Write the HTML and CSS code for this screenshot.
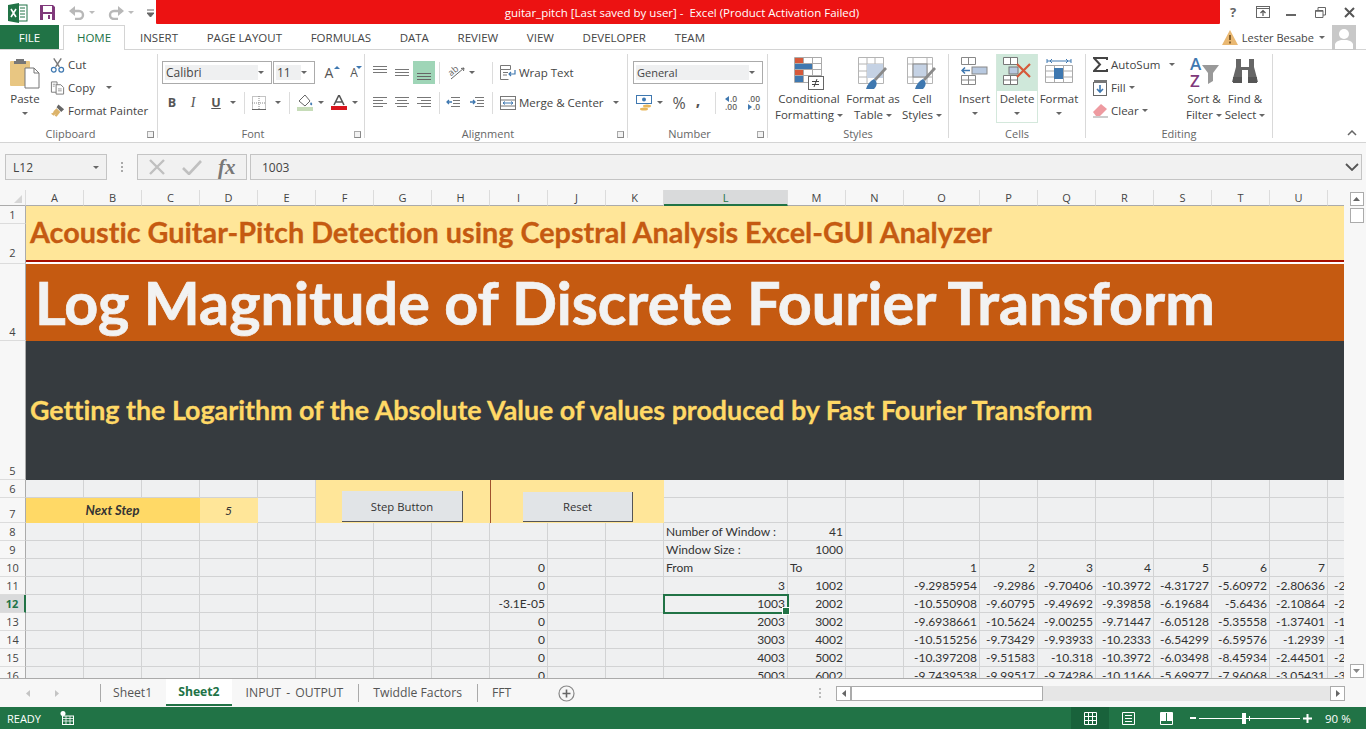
FILE: index.html
```html
<!DOCTYPE html>
<html lang="en">
<head>
  <meta charset="UTF-8" />
  <title>guitar_pitch - Excel</title>
  <link rel="stylesheet" href="styles.css">
</head>
<body>

  <!-- title bar -->
  <div class="titlebar">
    <div class="qat">
      <svg class="logo" width="20" height="20" viewBox="0 0 20 20"><rect x="7" y="2" width="12" height="16" fill="#fff" stroke="#217346"/><path d="M12 5h5M12 8h5M12 11h5M12 14h5" stroke="#217346"/><path d="M0 2l11-2v20L0 18z" fill="#217346"/><path d="M3 6l5 8M8 6l-5 8" stroke="#fff" stroke-width="1.6"/></svg>
      <svg class="save" width="15" height="15" viewBox="0 0 15 15"><path d="M0 0h13l2 2v13H0z" fill="#80397b"/><rect x="3" y="1" width="9" height="6" fill="#fff"/><rect x="3" y="9" width="9" height="6" fill="#fff"/><rect x="8" y="10" width="2" height="4" fill="#80397b"/></svg>
      <svg class="undo" width="16" height="14" viewBox="0 0 16 14"><path d="M2 5h8a4 4 0 0 1 0 8H6" fill="none" stroke="#b8b8b8" stroke-width="2.4"/><path d="M6 0v10L0 5z" fill="#b8b8b8"/></svg>
      <i class="caret caret-light qat-caret"></i>
      <svg class="redo" width="16" height="14" viewBox="0 0 16 14"><path d="M14 5H6a4 4 0 0 0 0 8h4" fill="none" stroke="#b8b8b8" stroke-width="2.4"/><path d="M10 0v10l6-5z" fill="#b8b8b8"/></svg>
      <i class="caret caret-light qat-caret"></i>
      <svg class="custom" width="7" height="8" viewBox="0 0 7 8"><path d="M0 1h7M0 4h7l-3.500 4z" stroke="#666" fill="#666"/></svg>
    </div>
    <div class="title">guitar_pitch [Last saved by user] -&nbsp; Excel (Product Activation Failed)</div>
    <div class="winbtns">
      <span class="help">?</span>
      <svg width="14" height="12" viewBox="0 0 14 12"><rect x=".5" y=".5" width="13" height="11" fill="none" stroke="#666"/><path d="M1 2.500h12" stroke="#666"/><path d="M7 10V5M4.500 7L7 4.500 9.500 7" fill="none" stroke="#555" stroke-width="1.200"/></svg>
      <svg width="10" height="12" viewBox="0 0 10 12"><path d="M0 9h10" stroke="#666" stroke-width="2"/></svg>
      <svg width="11" height="11" viewBox="0 0 11 11"><path d="M3 3V.5h7.500V8H8M.5 3.500H8v7H.5z" fill="none" stroke="#666"/><path d="M.5 4h7.500" stroke="#666" stroke-width="1.500"/></svg>
      <svg width="11" height="11" viewBox="0 0 11 11"><path d="M1 1l9 9M10 1l-9 9" stroke="#555" stroke-width="2"/></svg>
    </div>
  </div>

  <!-- tabs -->
  <div class="tabs">
    <div class="tab-file">FILE</div>
    <div class="tab-home">HOME</div>
    <div class="tab-list">
      <span>INSERT</span><span>PAGE LAYOUT</span><span>FORMULAS</span><span>DATA</span><span>REVIEW</span><span>VIEW</span><span>DEVELOPER</span><span>TEAM</span>
    </div>
    <div class="account">
      <svg width="16" height="15" viewBox="0 0 16 15"><path d="M8 0l8 15H0z" fill="#e9b872"/><path d="M8 5v5M8 11.500v2" stroke="#6b4a1c" stroke-width="1.600"/></svg>
      <span class="user">Lester Besabe</span>
      <i class="caret"></i>
      <div class="avatar"><svg width="24" height="24" viewBox="0 0 24 24"><circle cx="12" cy="9" r="5" fill="#fff"/><path d="M3 24v-5q1-3 6-4h6q5 1 6 4v5z" fill="#fff"/></svg></div>
    </div>
  </div>

  <!-- ribbon -->
  <div class="ribbon">

    <div class="group g-clipboard">
      <div class="group-body">
        <div class="big w50">
          <div class="big-icon">
            <svg width="30" height="32" viewBox="0 0 30 32"><rect x="0" y="4" width="20" height="25" rx="1" fill="#e8c682"/><path d="M6 4V2h8v2h2v3H4V4z" fill="#777"/><path d="M15 11h9l5 5v15H15z" fill="#fff" stroke="#777"/><path d="M24 11v5h5" fill="none" stroke="#777"/></svg>
          </div>
          <div class="big-text">Paste</div>
          <i class="caret"></i>
        </div>
        <div class="stack">
          <div class="line">
            <svg class="ico" width="16" height="16" viewBox="0 0 16 16"><path d="M4 1l6 9M12 1L6 10" stroke="#777" stroke-width="1.500"/><circle cx="4" cy="13" r="2.500" fill="none" stroke="#3f78b0" stroke-width="1.300"/><circle cx="12" cy="13" r="2.500" fill="none" stroke="#3f78b0" stroke-width="1.300"/></svg>
            <span>Cut</span>
          </div>
          <div class="line">
            <svg class="ico" width="16" height="16" viewBox="0 0 16 16"><path d="M1.500 1.500h6v11h-6z" fill="#fff" stroke="#777"/><path d="M6.500 4.500h5l3 3v7h-8z" fill="#fff" stroke="#777"/><path d="M8.500 9h4M8.500 11h4M3 4h3M3 6h2" stroke="#999"/></svg>
            <span>Copy</span><i class="caret caret-copy"></i>
          </div>
          <div class="line">
            <svg class="ico" width="16" height="16" viewBox="0 0 16 16"><path d="M9 1l6 5-3 3-5-5z" fill="#666"/><path d="M7 5l4 4-4 5-2-1 1-2-2 2-3-2q3-1 3-3z" fill="#dcb36a"/></svg>
            <span>Format Painter</span>
          </div>
        </div>
      </div>
      <div class="group-label">Clipboard</div>
      <i class="launcher"></i>
    </div>

    <div class="group g-font">
      <div class="group-body grid-rows">
        <div class="tool-row">
          <div class="combo w110"><span class="combo-text c-font">Calibri</span><i class="caret"></i></div>
          <div class="combo w42 joined"><span class="combo-text c-size">11</span><i class="caret"></i></div>
          <div class="tool w28 glyph">A<i class="mini-up"></i></div>
          <div class="tool w22 glyph small-a">A<i class="mini-down"></i></div>
        </div>
        <div class="tool-row">
          <div class="tool w20 fmt"><b>B</b></div>
          <div class="tool w22 fmt"><i class="ital">I</i></div>
          <div class="tool w24 fmt"><b class="und">U</b></div>
          <div class="tool w10"><i class="caret"></i></div>
          <i class="sep ml6"></i>
          <div class="tool w28">
            <svg width="14" height="14" viewBox="0 0 14 14"><rect x=".5" y=".5" width="13" height="13" fill="none" stroke="#888" stroke-dasharray="1 1"/><path d="M7 0v14M0 7h14" stroke="#888" stroke-dasharray="1 1"/><path d="M0 13.500h14" stroke="#666"/></svg>
          </div>
          <div class="tool w10"><i class="caret"></i></div>
          <i class="sep ml6"></i>
          <div class="tool w21 ml5">
            <svg width="17" height="17" viewBox="0 0 17 17"><path d="M2 7l6-6 5 6-5 5z" fill="#fff" stroke="#666"/><path d="M14 8q2 2 1 3t-2-1z" fill="#3f78b0"/><rect x="0" y="13" width="16" height="4" fill="#c6dcb8"/></svg>
          </div>
          <div class="tool w10"><i class="caret"></i></div>
          <div class="tool w22 ml2">
            <svg width="16" height="15" viewBox="0 0 16 15"><path d="M3 10L8 0l5 10M5 7h6" fill="none" stroke="#555" stroke-width="1.600"/><rect y="11" width="16" height="4" fill="#d8161e"/></svg>
          </div>
          <div class="tool w10"><i class="caret"></i></div>
        </div>
      </div>
      <div class="group-label">Font</div>
      <i class="launcher"></i>
    </div>

    <div class="group g-align">
      <div class="group-body grid-rows">
        <div class="tool-row">
          <div class="tool w22"><svg width="14" height="14" viewBox="0 0 14 14"><path d="M0 .5h14M0 3.500h14M0 6.500h14" stroke="#777"/></svg></div>
          <div class="tool w22"><svg width="14" height="14" viewBox="0 0 14 14"><path d="M0 3.500h14M0 6.500h14M0 9.500h14" stroke="#777"/></svg></div>
          <div class="tool w22 on"><svg width="14" height="14" viewBox="0 0 14 14"><path d="M0 7.500h14M0 10.500h14M0 13.500h14" stroke="#666"/></svg></div>
          <i class="sep ml4"></i>
          <div class="tool w22 ml5"><svg class="svg-open" width="17" height="15" viewBox="0 0 17 15"><path d="M3 14L16 3" stroke="#666"/><path d="M16 3l-3 .5M16 3l-.5 3" stroke="#666"/><text x="0" y="9" class="svg-ab" transform="rotate(-40 5 6)">ab</text></svg></div>
          <div class="tool w10"><i class="caret"></i></div>
          <i class="sep ml15"></i>
          <div class="tool w15 ml7"><svg width="16" height="15" viewBox="0 0 16 15"><path d="M.5.500h10v4H.5zM.5 4.500v10h8M3 7.500h5M3 10h4" fill="none" stroke="#777"/><path d="M15 5v4H9M11 7L9 9l2 2" fill="none" stroke="#3f78b0" stroke-width="1.200"/></svg></div>
          <span class="tool-text">Wrap Text</span>
        </div>
        <div class="tool-row">
          <div class="tool w22"><svg width="14" height="12" viewBox="0 0 14 12"><path d="M0 .5h14M0 3.500h10M0 6.500h14M0 9.500h10" stroke="#777"/></svg></div>
          <div class="tool w22"><svg width="14" height="12" viewBox="0 0 14 12"><path d="M0 .5h14M2 3.500h10M0 6.500h14M2 9.500h10" stroke="#777"/></svg></div>
          <div class="tool w22"><svg width="14" height="12" viewBox="0 0 14 12"><path d="M0 .5h14M4 3.500h10M0 6.500h14M4 9.500h10" stroke="#777"/></svg></div>
          <i class="sep ml4"></i>
          <div class="tool w22 ml2"><svg width="14" height="12" viewBox="0 0 14 12"><path d="M5 .5h9M7 3.500h7M7 6.500h7M5 9.500h9" stroke="#777"/><path d="M6 5H1M3 3L1 5l2 2" fill="none" stroke="#3f78b0" stroke-width="1.300"/></svg></div>
          <div class="tool w22 ml2"><svg width="14" height="12" viewBox="0 0 14 12"><path d="M5 .5h9M7 3.500h7M7 6.500h7M5 9.500h9" stroke="#777"/><path d="M0 5h5M3 3l2 2-2 2" fill="none" stroke="#3f78b0" stroke-width="1.300"/></svg></div>
          <i class="sep ml4"></i>
          <div class="tool w15 ml7"><svg width="16" height="14" viewBox="0 0 16 14"><rect x=".5" y=".5" width="15" height="13" fill="none" stroke="#777"/><path d="M.5 4h15M.5 10h15" stroke="#777"/><path d="M3 7h10M5 5.500L3 7l2 1.500M11 5.500L13 7l-2 1.500" fill="none" stroke="#3f78b0"/></svg></div>
          <span class="tool-text">Merge &amp; Center</span>
          <i class="caret merge-caret"></i>
        </div>
      </div>
      <div class="group-label">Alignment</div>
      <i class="launcher"></i>
    </div>

    <div class="group g-number">
      <div class="group-body grid-rows">
        <div class="tool-row">
          <div class="combo w130"><span class="combo-text c-general">General</span><i class="caret"></i></div>
        </div>
        <div class="tool-row">
          <div class="tool w22"><svg width="16" height="16" viewBox="0 0 16 16"><rect x=".5" y=".5" width="15" height="8" fill="#fff" stroke="#3f78b0"/><circle cx="8" cy="4.500" r="2" fill="#3f78b0"/><ellipse cx="11" cy="11" rx="4" ry="1.500" fill="#e8b75c"/><ellipse cx="8" cy="14" rx="4" ry="1.500" fill="#e8b75c"/></svg></div>
          <div class="tool w10"><i class="caret"></i></div>
          <div class="tool w22 ml3 percent">%</div>
          <div class="tool w16 comma">,</div>
          <i class="sep ml9"></i>
          <div class="tool w22 ml4 dec"><span class="dec-top"><i class="arrow-l"></i>.0</span><span>.00</span></div>
          <div class="tool w22 ml1 dec"><span>.00</span><span class="dec-top"><i class="arrow-r"></i>.0</span></div>
        </div>
      </div>
      <div class="group-label">Number</div>
      <i class="launcher"></i>
    </div>

    <div class="group g-styles">
      <div class="group-body">
        <div class="big w82">
          <div class="big-icon">
            <svg width="30" height="33" viewBox="0 0 30 33"><path d="M.5.500h27v25H.5zM.5 6.500h27M.5 12.500h27M.5 18.500h27M9.500.5v25M18.500.5v25" fill="#fff" stroke="#aaa"/><rect x="1" y="1" width="8" height="5" fill="#d6593a"/><rect x="1" y="7" width="17" height="5" fill="#3f78b0"/><rect x="1" y="13" width="8" height="5" fill="#d6593a"/><rect x="1" y="19" width="8" height="6" fill="#3f78b0"/><rect x="14.500" y="19.500" width="15" height="13" fill="#fff" stroke="#666"/><path d="M18 24.500h7M18 27.500h7M20 30l3-8" stroke="#444"/></svg>
          </div>
          <div class="big-text">Conditional</div>
          <div class="big-text">Formatting <i class="caret"></i></div>
        </div>
        <div class="big w46">
          <div class="big-icon">
            <svg width="30" height="33" viewBox="0 0 30 33"><path d="M.5.500h25v26H.5zM.5 7h25M.5 14h25M.5 20h25M9 .5v26M17 .5v26" fill="#fff" stroke="#b4b4b4"/><rect x="9" y="7" width="16" height="14" fill="#c5d2e4"/><path d="M29 12l-11 12-2-2L27 10z" fill="#8a8a8a"/><path d="M16 22q-6 3-8 10h8q4-4 2-8z" fill="#3f78b0"/></svg>
          </div>
          <div class="big-text">Format as</div>
          <div class="big-text">Table <i class="caret"></i></div>
        </div>
        <div class="big w52">
          <div class="big-icon">
            <svg width="30" height="33" viewBox="0 0 30 33"><path d="M.5.500h25v26H.5zM.5 7h25M.5 20h25M6 .5v26M20 .5v26" fill="#fff" stroke="#b4b4b4"/><rect x="6" y="7" width="14" height="13" fill="#c5d2e4" stroke="#888"/><path d="M29 12l-11 12-2-2L27 10z" fill="#8a8a8a"/><path d="M16 22q-6 3-8 10h8q4-4 2-8z" fill="#3f78b0"/></svg>
          </div>
          <div class="big-text">Cell</div>
          <div class="big-text">Styles <i class="caret"></i></div>
        </div>
      </div>
      <div class="group-label">Styles</div>
    </div>

    <div class="group g-cells">
      <div class="group-body">
        <div class="big w43">
          <div class="big-icon">
            <svg width="28" height="28" viewBox="0 0 28 28"><path d="M.5.500h14v7H.5zM.5 18.500h14v9H.5zM7.500 18.500v9M.5 23h14M7.500.5v7" fill="#fff" stroke="#888"/><rect x="11" y="10" width="15" height="7" fill="#b8c9e0" stroke="#888"/><path d="M9 13.500H1M4 10.500l-3 3 3 3" fill="none" stroke="#3f78b0" stroke-width="1.500"/></svg>
          </div>
          <div class="big-text">Insert</div>
          <i class="caret caret-big"></i>
        </div>
        <div class="big w42 delete">
          <div class="delete-top">
            <svg width="28" height="28" viewBox="0 0 28 28"><path d="M.5.500h14v7H.5zM.5 18.500h14v9H.5zM7.500 18.500v9M.5 23h14M7.500.5v7" fill="#fff" stroke="#777"/><rect x="6" y="10" width="9" height="7" fill="#b8c9e0" stroke="#777"/><path d="M14 7l13 13M27 7L14 20" stroke="#d6593a" stroke-width="2.200"/></svg>
          </div>
          <div class="big-text">Delete</div>
          <i class="caret caret-big"></i>
        </div>
        <div class="big w42">
          <div class="big-icon">
            <svg width="28" height="30" viewBox="0 0 28 30"><path d="M2 4h24M2 2v4M26 2v4M5 4l2-2M5 4l2 2M23 4l-2-2M23 4l-2 2" fill="none" stroke="#3f78b0"/><path d="M.5 8.500h27v17H.5zM.5 14h27M.5 20h27M9.500 8.500v17M18.500 8.500v17" fill="#fff" stroke="#aaa"/><rect x="9" y="11" width="9" height="11" fill="#3f78b0"/></svg>
          </div>
          <div class="big-text">Format</div>
          <i class="caret caret-big"></i>
        </div>
      </div>
      <div class="group-label">Cells</div>
    </div>

    <div class="group g-editing">
      <div class="group-body">
        <div class="stack w90">
          <div class="line">
            <svg class="ico" width="15" height="15" viewBox="0 0 15 15"><path d="M14 3V1H1l6 6.500L1 14h13v-2" fill="none" stroke="#444" stroke-width="2"/></svg>
            <span>AutoSum</span><i class="caret caret-sum"></i>
          </div>
          <div class="line">
            <svg class="ico" width="15" height="16" viewBox="0 0 15 16"><rect x=".5" y="2.500" width="13" height="13" fill="#fff" stroke="#666"/><rect x="1" y="0" width="13" height="3" fill="#777"/><path d="M7 5v7M4 9l3 3 3-3" fill="none" stroke="#3f78b0" stroke-width="1.600"/></svg>
            <span>Fill</span><i class="caret caret-gap"></i>
          </div>
          <div class="line">
            <svg class="ico" width="15" height="15" viewBox="0 0 15 15"><path d="M0 9l8-8 6 5-7 7H3z" fill="#ee9aa0"/><path d="M0 14h15" stroke="#999"/></svg>
            <span>Clear</span><i class="caret caret-gap"></i>
          </div>
        </div>
        <div class="big w42">
          <div class="big-icon">
            <svg class="svg-open" width="30" height="32" viewBox="0 0 30 32"><text x="1" y="13" class="svg-az az-blue">A</text><text x="1" y="30" class="svg-az az-purple">Z</text><path d="M13 8h17l-6 8v8l-5 3V16z" fill="#999"/></svg>
          </div>
          <div class="big-text">Sort &amp;</div>
          <div class="big-text">Filter <i class="caret"></i></div>
        </div>
        <div class="big w40">
          <div class="big-icon">
            <svg width="26" height="28" viewBox="0 0 26 28"><path d="M4 2h5v8h8V2h5v8l4 15H16V13h-6v12H0L4 10z" fill="#666"/><rect x="1" y="20" width="9" height="6" fill="#555"/><rect x="16" y="20" width="9" height="6" fill="#555"/></svg>
          </div>
          <div class="big-text">Find &amp;</div>
          <div class="big-text">Select <i class="caret"></i></div>
        </div>
      </div>
      <div class="group-label">Editing</div>
    </div>

    <svg class="collapse" width="10" height="6" viewBox="0 0 10 6"><path d="M1 5l4-4 4 4" fill="none" stroke="#666" stroke-width="1.500"/></svg>
  </div>

  <!-- formula bar -->
  <div class="formula-bar">
    <div class="namebox"><span>L12</span><i class="caret"></i></div>
    <div class="fdots"></div>
    <div class="fbuttons">
      <svg width="18" height="16" viewBox="0 0 18 16"><path d="M2 1l14 14M16 1L2 15" stroke="#c0c0c0" stroke-width="2.400"/></svg>
      <svg width="20" height="16" viewBox="0 0 20 16"><path d="M1 9l6 6L19 2" fill="none" stroke="#c0c0c0" stroke-width="2.600"/></svg>
      <span class="fx">fx</span>
    </div>
    <div class="finput"><span>1003</span><svg width="14" height="8" viewBox="0 0 14 8"><path d="M1 1l6 6 6-6" fill="none" stroke="#555" stroke-width="1.800"/></svg></div>
  </div>

  <!-- sheet -->
  <div class="sheet-area">
    <div class="sheet-wrap">
      <table class="sheet">
        <colgroup>
          <col class="c-head"><col span="11" class="c-std"><col class="c-l"><col span="2" class="c-std"><col class="c-o"><col span="7" class="c-std">
        </colgroup>
        <thead>
          <tr class="h16">
            <th class="corner"><i></i></th><th>A</th><th>B</th><th>C</th><th>D</th><th>E</th><th>F</th><th>G</th><th>H</th><th>I</th><th>J</th><th>K</th><th class="active-col">L</th><th>M</th><th>N</th><th>O</th><th>P</th><th>Q</th><th>R</th><th>S</th><th>T</th><th>U</th><th>V</th>
          </tr>
        </thead>
        <tbody>
          <tr class="h18"><th class="rh">1</th>
            <td colspan="22" rowspan="2" class="banner-top">Acoustic Guitar-Pitch Detection using Cepstral Analysis Excel-GUI Analyzer</td></tr>
          <tr class="h40"><th class="rh rh-2">2</th></tr>
          <tr class="h77"><th class="rh">4</th>
            <td colspan="22" class="banner-main">Log Magnitude of Discrete Fourier Transform</td></tr>
          <tr class="h139"><th class="rh">5</th>
            <td colspan="22" class="banner-dark">Getting the Logarithm of the Absolute Value of values produced by Fast Fourier Transform</td></tr>
          <tr class="h18"><th class="rh">6</th>
            <td></td><td></td><td></td><td></td><td></td>
            <td colspan="3" rowspan="2" class="panel panel-step"><button class="macro-btn btn-step">Step Button</button></td>
            <td colspan="3" rowspan="2" class="panel panel-reset"><button class="macro-btn btn-reset">Reset</button></td>
            <td></td><td></td><td></td><td></td><td></td><td></td><td></td><td></td><td></td><td></td><td></td></tr>
          <tr class="h25"><th class="rh">7</th>
            <td colspan="3" class="next-step">Next Step</td><td class="next-val">5</td><td></td>
            <td></td><td></td><td></td><td></td><td></td><td></td><td></td><td></td><td></td><td></td><td></td></tr>
          <tr class="h18"><th class="rh">8</th>
            <td></td><td></td><td></td><td></td><td></td><td></td><td></td><td></td><td></td><td></td><td></td>
            <td class="txt">Number of Window :</td><td class="num">41</td>
            <td></td><td></td><td></td><td></td><td></td><td></td><td></td><td></td><td></td></tr>
          <tr class="h18"><th class="rh">9</th>
            <td></td><td></td><td></td><td></td><td></td><td></td><td></td><td></td><td></td><td></td><td></td>
            <td class="txt">Window Size :</td><td class="num">1000</td>
            <td></td><td></td><td></td><td></td><td></td><td></td><td></td><td></td><td></td></tr>
          <tr class="h18"><th class="rh">10</th>
            <td></td><td></td><td></td><td></td><td></td><td></td><td></td><td></td><td class="num">0</td><td></td><td></td>
            <td class="txt">From</td><td class="txt">To</td><td></td>
            <td class="num">1</td><td class="num">2</td><td class="num">3</td><td class="num">4</td><td class="num">5</td><td class="num">6</td><td class="num">7</td><td></td></tr>
          <tr class="h18"><th class="rh">11</th>
            <td></td><td></td><td></td><td></td><td></td><td></td><td></td><td></td><td class="num">0</td><td></td><td></td>
            <td class="num">3</td><td class="num">1002</td><td></td>
            <td class="num">-9.2985954</td><td class="num">-9.2986</td><td class="num">-9.70406</td><td class="num">-10.3972</td><td class="num">-4.31727</td><td class="num">-5.60972</td><td class="num">-2.80636</td><td class="num">-2.45871</td></tr>
          <tr class="h18"><th class="rh active-row">12</th>
            <td></td><td></td><td></td><td></td><td></td><td></td><td></td><td></td><td class="num">-3.1E-05</td><td></td><td></td>
            <td class="num selected">1003</td><td class="num">2002</td><td></td>
            <td class="num">-10.550908</td><td class="num">-9.60795</td><td class="num">-9.49692</td><td class="num">-9.39858</td><td class="num">-6.19684</td><td class="num">-5.6436</td><td class="num">-2.10864</td><td class="num">-2.31740</td></tr>
          <tr class="h18"><th class="rh">13</th>
            <td></td><td></td><td></td><td></td><td></td><td></td><td></td><td></td><td class="num">0</td><td></td><td></td>
            <td class="num">2003</td><td class="num">3002</td><td></td>
            <td class="num">-9.6938661</td><td class="num">-10.5624</td><td class="num">-9.00255</td><td class="num">-9.71447</td><td class="num">-6.05128</td><td class="num">-5.35558</td><td class="num">-1.37401</td><td class="num">-1.82306</td></tr>
          <tr class="h18"><th class="rh">14</th>
            <td></td><td></td><td></td><td></td><td></td><td></td><td></td><td></td><td class="num">0</td><td></td><td></td>
            <td class="num">3003</td><td class="num">4002</td><td></td>
            <td class="num">-10.515256</td><td class="num">-9.73429</td><td class="num">-9.93933</td><td class="num">-10.2333</td><td class="num">-6.54299</td><td class="num">-6.59576</td><td class="num">-1.2939</td><td class="num">-1.60423</td></tr>
          <tr class="h18"><th class="rh">15</th>
            <td></td><td></td><td></td><td></td><td></td><td></td><td></td><td></td><td class="num">0</td><td></td><td></td>
            <td class="num">4003</td><td class="num">5002</td><td></td>
            <td class="num">-10.397208</td><td class="num">-9.51583</td><td class="num">-10.318</td><td class="num">-10.3972</td><td class="num">-6.03498</td><td class="num">-8.45934</td><td class="num">-2.44501</td><td class="num">-2.71655</td></tr>
          <tr class="h18"><th class="rh">16</th>
            <td></td><td></td><td></td><td></td><td></td><td></td><td></td><td></td><td class="num">0</td><td></td><td></td>
            <td class="num">5003</td><td class="num">6002</td><td></td>
            <td class="num">-9.7439538</td><td class="num">-9.99517</td><td class="num">-9.74286</td><td class="num">-10.1166</td><td class="num">-5.69977</td><td class="num">-7.96068</td><td class="num">-3.05431</td><td class="num">-3.12078</td></tr>
        </tbody>
      </table>
    </div>
    <div class="vscroll">
      <div class="sb-btn"><svg width="7" height="4" viewBox="0 0 7 4"><path d="M3.500 0L7 4H0z" fill="#666"/></svg></div>
      <div class="sb-thumb"></div>
      <div class="sb-btn sb-down"><svg width="7" height="4" viewBox="0 0 7 4"><path d="M3.500 4L7 0H0z" fill="#888"/></svg></div>
    </div>
  </div>

  <!-- sheet tabs -->
  <div class="sheet-tabs">
    <div class="tab-arrows">
      <svg width="4" height="7" viewBox="0 0 4 7"><path d="M4 0v7L0 3.500z" fill="#c4c4c4"/></svg>
      <svg width="4" height="7" viewBox="0 0 4 7"><path d="M0 0v7l4-3.500z" fill="#c4c4c4"/></svg>
    </div>
    <div class="stab">Sheet1</div>
    <div class="stab stab-on">Sheet2</div>
    <div class="stab stab-io">INPUT - OUTPUT</div>
    <div class="stab stab-line">Twiddle Factors</div>
    <div class="stab stab-line">FFT</div>
    <svg class="add-sheet" width="17" height="17" viewBox="0 0 17 17"><circle cx="8.500" cy="8.500" r="7.500" fill="none" stroke="#888" stroke-width="1.200"/><path d="M8.500 4.500v8M4.500 8.500h8" stroke="#666" stroke-width="1.600"/></svg>
    <div class="hdots"></div>
    <div class="hscroll">
      <div class="hs-btn"><svg width="4" height="7" viewBox="0 0 4 7"><path d="M4 0v7L0 3.500z" fill="#666"/></svg></div>
      <div class="hs-thumb"></div>
      <div class="hs-btn hs-right"><svg width="4" height="7" viewBox="0 0 4 7"><path d="M0 0v7l4-3.500z" fill="#666"/></svg></div>
    </div>
  </div>

  <!-- status bar -->
  <div class="statusbar">
    <span class="ready">READY</span>
    <svg class="macro" width="14" height="14" viewBox="0 0 14 14"><circle cx="3" cy="2.500" r="2.500" fill="#fff"/><rect x="2.500" y="5" width="11" height="8.500" fill="none" stroke="#fff"/><path d="M2.500 7.500h11M2.500 10h11M6 5v8.500M10 5v8.500" stroke="#fff" stroke-width=".8"/></svg>
    <div class="views">
      <div class="view view-on"><svg width="13" height="13" viewBox="0 0 13 13"><path d="M.5.500h12v12H.5zM.5 4.500h12M.5 8.500h12M4.500.5v12M8.500.5v12" fill="none" stroke="#fff"/></svg></div>
      <div class="view"><svg width="13" height="13" viewBox="0 0 13 13"><path d="M.5.500h12v12H.5z" fill="none" stroke="#fff"/><path d="M3 3.500h7M3 6.500h7M3 9.500h7" stroke="#fff"/></svg></div>
      <div class="view"><svg width="13" height="13" viewBox="0 0 13 13"><path d="M.5.500h12v12H.5z" fill="none" stroke="#fff"/><path d="M1 1h5v8H1zM7 1h5v8H7z" fill="#fff"/></svg></div>
    </div>
    <div class="zoom">
      <i class="z-minus"></i>
      <div class="z-track"><i class="z-tick"></i><i class="z-thumb"></i></div>
      <svg width="9" height="9" viewBox="0 0 9 9"><path d="M4.500 0v9M0 4.500h9" stroke="#fff" stroke-width="2"/></svg>
      <span class="z-val">90 %</span>
    </div>
  </div>

</body>
</html>
```

FILE: styles.css
```css
* {
  box-sizing: border-box;
}

html, body {
  height: 100%;
}

body {
  margin: 0;
  display: flex;
  flex-direction: column;
  overflow: hidden;
  background-color: #fff;
  font-family: "Open Sans", sans-serif;
  font-size: 11.5px;
  color: #444;
}

svg {
  display: block;
  flex: none;
}

.svg-open {
  overflow: visible;
}

.caret {
  display: inline-block;
  width: 0;
  height: 0;
  flex: none;
  border-left: 3px solid transparent;
  border-right: 3px solid transparent;
  border-top: 3px solid #666;
  vertical-align: middle;
}

.caret-light {
  border-top-color: #bbb;
}

/* title bar */
.titlebar {
  display: flex;
  height: 25px;
  flex: none;
}

.qat {
  width: 156px;
  display: flex;
  align-items: center;
  padding-left: 8px;
}

.save {
  margin-left: 12px;
}

.undo {
  margin-left: 14px;
}

.qat-caret {
  margin-left: 4px;
}

.redo {
  margin-left: 13px;
}

.custom {
  margin-left: 13px;
}

.title {
  flex: 1;
  height: 24px;
  line-height: 26px;
  background-color: #ec1212;
  color: #fff;
  text-align: center;
  font-size: 11.5px;
  padding-right: 12px;
  border-bottom-left-radius: 1px;
  border-bottom-right-radius: 1px;
}

.winbtns {
  width: 146px;
  display: flex;
  align-items: center;
  padding-left: 10px;
  height: 24px;
}

.help {
  font-weight: 700;
  font-size: 13px;
  color: #666;
  width: 26px;
}

.winbtns svg:nth-of-type(2) {
  margin-left: 16px;
}

.winbtns svg:nth-of-type(3) {
  margin-left: 19px;
}

.winbtns svg:nth-of-type(4) {
  margin-left: 18px;
}

/* ribbon tabs */
.tabs {
  display: flex;
  height: 25px;
  flex: none;
  border-bottom: 1px solid #d4d4d4;
  font-size: 11.5px;
}

.tab-file {
  width: 59px;
  background-color: #217346;
  color: #fff;
  text-align: center;
  line-height: 25px;
}

.tab-home {
  width: 62px;
  height: 25px;
  margin-left: 4px;
  background-color: #fff;
  border: 1px solid #d4d4d4;
  border-bottom: none;
  color: #217346;
  text-align: center;
  line-height: 24px;
}

.tab-list {
  display: flex;
  gap: 28.7px;
  margin-left: 15px;
  line-height: 25px;
}

.account {
  margin-left: auto;
  display: flex;
  align-items: center;
  height: 24px;
  padding-right: 10px;
  font-size: 11px;
}

.user {
  margin-left: 4px;
  margin-right: 5px;
}

.avatar {
  width: 24px;
  height: 25px;
  margin-left: 7px;
  background-color: #c8c8c8;
}

/* ribbon */
.ribbon {
  position: relative;
  display: flex;
  height: 93px;
  flex: none;
  border-bottom: 1px solid #d4d4d4;
}

.group {
  position: relative;
  display: flex;
  flex-direction: column;
  margin-top: 4px;
  height: 84px;
  border-right: 1px solid #d9d9d9;
}

.g-clipboard { width: 158px; }
.g-font { width: 207px; padding-left: 4px; }
.g-align { width: 263px; padding-left: 4px; }
.g-number { width: 140px; padding-left: 5px; }
.g-styles { width: 181px; }
.g-cells { width: 137px; padding-left: 4px; }
.g-editing { width: 187px; padding-left: 7px; }

.group-body {
  display: flex;
  flex: none;
  height: 70px;
}

.grid-rows {
  flex-direction: column;
  padding-top: 7px;
  gap: 7px;
}

.group-label {
  height: 14px;
  line-height: 20px;
  text-align: center;
  font-size: 11px;
  color: #666;
}

.g-clipboard .group-label { padding-right: 16px; }
.g-font .group-label { margin-left: -4px; padding-right: 16px; }
.g-align .group-label { margin-left: -4px; padding-right: 16px; }
.g-number .group-label { margin-left: -5px; padding-right: 16px; }
.g-cells .group-label { margin-left: -4px; }
.g-editing .group-label { margin-left: -7px; }

.launcher {
  position: absolute;
  right: 3px;
  bottom: 0;
  width: 7px;
  height: 7px;
  border-left: 1px solid #aaa;
  border-top: 1px solid #aaa;
  border-right: 1px solid #888;
  border-bottom: 1px solid #888;
  background-color: #f2f2f2;
}

.collapse {
  position: absolute;
  right: 9px;
  bottom: 6px;
}

/* big buttons */
.big {
  display: flex;
  flex-direction: column;
  align-items: center;
  padding-top: 3px;
  line-height: 16px;
  white-space: nowrap;
}

.big-icon {
  height: 34px;
  display: flex;
  align-items: flex-start;
  justify-content: center;
}

.big-text {
  height: 16px;
}

.big > .caret {
  margin-top: 5px;
}

.delete {
  padding-top: 0;
  height: 69px;
  border: 1px solid #d4e8dc;
  border-top: none;
}

.delete-top {
  width: 40px;
  height: 37px;
  padding: 3px 6px 0;
  background-color: #cfe8da;
}

.w10 { width: 10px; }
.w15 { width: 15px; }
.w16 { width: 16px; }
.w20 { width: 20px; }
.w21 { width: 21px; }
.w22 { width: 22px; }
.w24 { width: 24px; }
.w28 { width: 28px; }
.w40 { width: 40px; }
.w42 { width: 42px; }
.w43 { width: 43px; }
.w46 { width: 46px; }
.w50 { width: 50px; }
.w52 { width: 52px; }
.w82 { width: 82px; }
.w90 { width: 90px; }
.w110 { width: 110px; }
.w130 { width: 130px; }

.ml1 { margin-left: 1px; }
.ml2 { margin-left: 2px; }
.ml3 { margin-left: 3px; }
.ml4 { margin-left: 4px; }
.ml5 { margin-left: 5px; }
.ml6 { margin-left: 6px; }
.ml7 { margin-left: 7px; }
.ml9 { margin-left: 9px; }
.ml15 { margin-left: 15px; }

/* small stacked buttons */
.stack {
  display: flex;
  flex-direction: column;
  flex: none;
  margin-top: -1px;
}

.line {
  display: flex;
  align-items: center;
  height: 23px;
  white-space: nowrap;
}

.ico {
  width: 15px;
  margin-right: 3px;
}

.caret-copy {
  margin-left: 11px;
}

.caret-sum {
  margin-left: 9px;
}

.caret-gap {
  margin-left: 3px;
}

.caret-big {
  margin-top: 6px;
}

/* toolbar rows */
.tool-row {
  display: flex;
  align-items: center;
  height: 23px;
}

.tool {
  display: flex;
  align-items: center;
  justify-content: center;
  height: 23px;
  flex: none;
}

.tool.on {
  background-color: #9fd5b7;
}

.sep {
  display: block;
  width: 1px;
  height: 22px;
  flex: none;
  background-color: #dcdcdc;
}

.tool-text {
  margin-left: 4px;
  white-space: nowrap;
}

.merge-caret {
  margin-left: 9px;
}

.combo {
  display: flex;
  align-items: center;
  justify-content: space-between;
  height: 23px;
  padding: 0 7px 0 2px;
  border: 1px solid #ababab;
  font-size: 11px;
  color: #444;
}

.combo.joined {
  margin-left: 1px;
}

.combo-text {
  display: block;
  height: 15px;
  line-height: 15px;
  padding-left: 1px;
  background-color: #eff0f1;
}

.c-font { width: 93px; font-size: 12px; }
.c-size { width: 25px; font-size: 12px; }
.c-general { width: 114px; }

.glyph {
  position: relative;
  font-size: 14px;
  color: #555;
}

.small-a {
  font-size: 12px;
}

.mini-up, .mini-down {
  position: absolute;
  top: 5px;
  right: 3px;
  border-left: 3px solid transparent;
  border-right: 3px solid transparent;
}

.mini-up {
  border-bottom: 3px solid #3f78b0;
}

.mini-down {
  border-top: 3px solid #3f78b0;
}

.fmt {
  font-size: 12.5px;
  color: #555;
}

.fmt .ital {
  font-family: "Liberation Serif", serif;
  font-size: 14px;
}

.und {
  text-decoration: underline;
}

.percent {
  font-size: 16px;
  color: #555;
}

.comma {
  font-size: 16px;
  font-weight: 700;
  color: #555;
  padding-bottom: 6px;
}

.dec {
  flex-direction: column;
  font-size: 8.5px;
  line-height: 8px;
  font-weight: 600;
  color: #666;
}

.dec-top {
  display: flex;
  align-items: center;
}

.arrow-l {
  margin-right: 1px;
  border-top: 3px solid transparent;
  border-bottom: 3px solid transparent;
  border-right: 4px solid #3f78b0;
}

.arrow-r {
  margin-right: 1px;
  border-top: 3px solid transparent;
  border-bottom: 3px solid transparent;
  border-left: 4px solid #3f78b0;
}

.svg-ab {
  font-family: "Open Sans", sans-serif;
  font-size: 9px;
  fill: #666;
}

.svg-az {
  font-family: "Open Sans", sans-serif;
  font-size: 17px;
  font-weight: 600;
}

.az-blue { fill: #3f78b0; }
.az-purple { fill: #80397b; }

/* formula bar */
.formula-bar {
  display: flex;
  align-items: center;
  height: 47px;
  flex: none;
  padding: 1px 4px 0 5px;
  background-color: #f7f7f7;
}

.namebox {
  display: flex;
  align-items: center;
  justify-content: space-between;
  width: 102px;
  height: 26px;
  padding: 0 7px;
  background-color: #f1f1f1;
  border: 1px solid #c4c4c4;
  font-size: 12px;
}

.fdots {
  width: 2px;
  height: 10px;
  margin: 0 14px;
  border-left: 2px dotted #aaa;
}

.fbuttons {
  display: flex;
  align-items: center;
  width: 110px;
  height: 26px;
  padding-left: 10px;
  gap: 16px;
  background-color: #f1f1f1;
  border: 1px solid #c4c4c4;
}

.fx {
  font-family: "Liberation Serif", serif;
  font-style: italic;
  font-weight: 700;
  font-size: 21px;
  line-height: 22px;
  color: #777;
}

.finput {
  display: flex;
  align-items: center;
  justify-content: space-between;
  flex: 1;
  height: 26px;
  margin-left: 3px;
  padding: 0 2px 0 11px;
  background-color: #f1f1f1;
  border: 1px solid #c4c4c4;
  font-size: 12px;
}

/* sheet */
.sheet-area {
  display: flex;
  height: 489px;
  flex: none;
}

.sheet-wrap {
  width: 1344px;
  height: 489px;
  overflow: hidden;
  border-bottom: 1px solid #aaa;
}

.sheet {
  table-layout: fixed;
  width: 1386px;
  border-collapse: separate;
  border-spacing: 0;
  background-color: #eff0f1;
  font-family: Lato, sans-serif;
  font-size: 12px;
  font-variant-ligatures: none;
  color: #333;
}

.c-head { width: 26px; }
.c-std { width: 58px; }
.c-l { width: 124px; }
.c-o { width: 76px; }

.sheet td, .sheet th {
  padding: 0;
  overflow: hidden;
  white-space: nowrap;
}

.sheet td {
  border-right: 1px solid #d2d3d4;
  border-bottom: 1px solid #d2d3d4;
}

.sheet thead th {
  font-family: "Open Sans", sans-serif;
  font-size: 11px;
  line-height: 13px;
  font-weight: 400;
  color: #444;
  background-color: #f7f7f7;
  border-right: 1px solid #dcdcdc;
  border-bottom: 1px solid #ababab;
}

.corner {
  position: relative;
}

.corner i {
  position: absolute;
  right: 3px;
  bottom: 2px;
  width: 0;
  height: 0;
  border-left: 8px solid transparent;
  border-bottom: 8px solid #d6d6d6;
}

.sheet thead th.active-col {
  background-color: #d9dadb;
  color: #217346;
  border-bottom: 2px solid #217346;
}

.sheet .rh {
  font-family: "Open Sans", sans-serif;
  font-size: 11px;
  font-weight: 400;
  color: #444;
  text-align: center;
  vertical-align: bottom;
  padding-bottom: 1px;
  background-color: #f7f7f7;
  border-right: 1px solid #ababab;
  border-bottom: 1px solid #dcdcdc;
}

.sheet .rh-2 {
  padding-bottom: 3px;
}

.sheet .active-row {
  background-color: #d9dadb;
  color: #217346;
  font-weight: 700;
  border-right: 2px solid #217346;
}

.h16 th { height: 16px; }
.h18 th, .h18 td { height: 18px; }
.h25 th, .h25 td { height: 25px; }
.h40 th, .h40 td { height: 40px; }
.h77 th, .h77 td { height: 77px; }
.h139 th, .h139 td { height: 139px; }

.num {
  text-align: right;
  padding-right: 2px !important;
}

.txt {
  padding-left: 2px !important;
  overflow: visible !important;
}

.selected {
  position: relative;
  overflow: visible !important;
  outline: 2px solid #217346;
  outline-offset: -1px;
}

.selected::after {
  content: "";
  position: absolute;
  right: -3px;
  bottom: -3px;
  width: 6px;
  height: 6px;
  background-color: #217346;
  border: 1px solid #fff;
}

.sheet td.banner-top, .sheet td.banner-main, .sheet td.banner-dark {
  border: none;
  font-weight: 700;
}

.sheet td.banner-top {
  padding: 0 0 4px 4px;
  background-color: #ffe699;
  color: #c55a11;
  font-size: 28.8px;
  line-height: 34px;
  -webkit-text-stroke: .3px #c55a11;
  border-bottom: 2px solid #fff;
  box-shadow: inset 0 -2px 0 #a61000;
}

.sheet td.banner-main {
  padding: 0 0 2px 9px;
  background-color: #c55a11;
  color: #f2f2f2;
  font-size: 59.3px;
  line-height: 70px;
  -webkit-text-stroke: .7px #f2f2f2;
}

.sheet td.banner-dark {
  padding: 0 0 2px 4px;
  background-color: #363b3f;
  color: #ffd966;
  font-size: 26.8px;
  -webkit-text-stroke: .3px #ffd966;
}

.sheet td.panel {
  vertical-align: top;
  background-color: #ffe699;
  border: none;
}

.sheet td.panel-step {
  padding: 11px 0 1px 26px;
}

.sheet td.panel-reset {
  padding: 12px 0 1px 32px;
  border-left: 1px solid #a0522d;
}

.macro-btn {
  display: block;
  padding: 0;
  background-color: #e1e4e7;
  border: none;
  border-right: 1px solid #555;
  border-bottom: 1px solid #555;
  font-family: "Open Sans", sans-serif;
  font-size: 11.3px;
  color: #333;
}

.btn-step {
  width: 121px;
  height: 31px;
}

.btn-reset {
  width: 110px;
  height: 30px;
}

.sheet td.next-step {
  text-align: center;
  font-weight: 700;
  font-style: italic;
  font-size: 13px;
  background-color: #ffd966;
  border-color: #ffd966;
}

.sheet td.next-val {
  text-align: center;
  font-style: italic;
  font-size: 12px;
  background-color: #ffe699;
  border-color: #ffe699;
}

/* scrollbars */
.vscroll {
  display: flex;
  flex-direction: column;
  align-items: center;
  width: 22px;
  padding: 2px 1px 1px 4px;
  gap: 2px;
  background-color: #f7f7f7;
}

.sb-btn {
  display: flex;
  align-items: center;
  justify-content: center;
  width: 14px;
  height: 14px;
  background-color: #fff;
  border: 1px solid #ababab;
}

.sb-thumb {
  width: 14px;
  height: 15px;
  background-color: #fff;
  border: 1px solid #ababab;
}

.sb-down {
  margin-top: auto;
}

/* sheet tabs */
.sheet-tabs {
  display: flex;
  align-items: center;
  height: 28px;
  flex: none;
  background-color: #f7f7f7;
  font-size: 12.2px;
  color: #555;
}

.tab-arrows {
  display: flex;
  align-items: center;
  gap: 25px;
  width: 100px;
  padding-left: 26px;
}

.stab {
  height: 18px;
  line-height: 18px;
  padding: 0 14px 0 12px;
  border-left: 1px solid #aaa;
}

.stab-on {
  height: 27px;
  margin-top: -1px;
  padding: 0 12px;
  line-height: 25px;
  background-color: #fff;
  color: #217346;
  font-weight: 700;
  border-left: none;
  border-bottom: 2px solid #217346;
}

.stab-on + .stab {
  border-left: none;
}

.stab-io {
  padding: 0 15px 0 14px;
  word-spacing: 2px;
}

.stab-line {
  padding: 0 15px 0 14px;
}

.sheet-tabs .stab:last-of-type {
  border-right: 1px solid #aaa;
}

.add-sheet {
  margin-left: 32px;
}

.hdots {
  width: 2px;
  height: 10px;
  margin-left: 244px;
  border-left: 2px dotted #bbb;
}

.hscroll {
  display: flex;
  width: 509px;
  height: 15px;
  margin-left: 15px;
  background-color: #e6e6e6;
}

.hs-btn {
  display: flex;
  align-items: center;
  justify-content: center;
  width: 15px;
  height: 15px;
  background-color: #fff;
  border: 1px solid #ababab;
}

.hs-thumb {
  width: 192px;
  background-color: #fff;
  border: 1px solid #ababab;
}

.hs-right {
  margin-left: auto;
}

/* status bar */
.statusbar {
  display: flex;
  align-items: center;
  height: 22px;
  flex: none;
  padding-left: 7px;
  background-color: #217346;
  color: #fff;
  font-size: 11px;
}

.ready {
  width: 53px;
}

.views {
  display: flex;
  margin-left: 997px;
}

.view {
  display: flex;
  align-items: center;
  justify-content: center;
  width: 38px;
  height: 22px;
}

.view-on {
  background-color: #19623b;
}

.zoom {
  display: flex;
  align-items: center;
  margin-left: 4px;
}

.z-minus {
  width: 6px;
  height: 2px;
  margin-left: 1px;
  background-color: #fff;
}

.z-track {
  position: relative;
  width: 101px;
  height: 1px;
  margin: 0 3px;
  background-color: #fff;
}

.z-thumb {
  position: absolute;
  left: 43px;
  top: -5px;
  width: 4px;
  height: 11px;
  background-color: #fff;
}

.z-tick {
  position: absolute;
  left: 50px;
  top: -2px;
  width: 1px;
  height: 5px;
  background-color: #fff;
}

.z-val {
  margin-left: 13px;
  font-size: 11.5px;
}
```
